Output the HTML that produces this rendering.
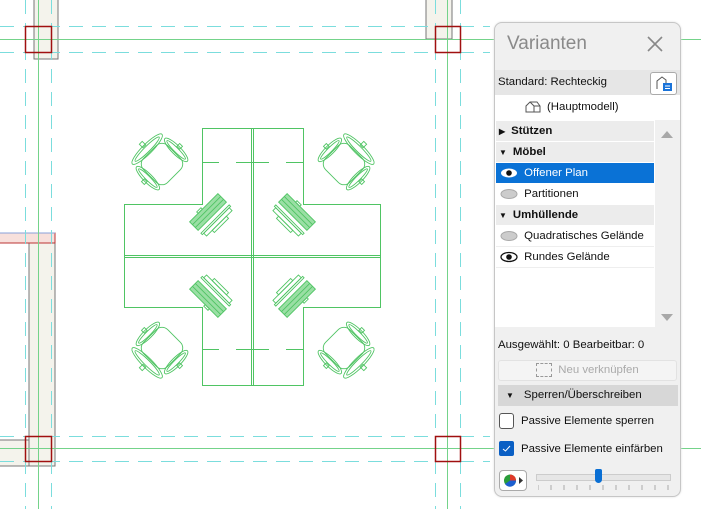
<!DOCTYPE html>
<html><head><meta charset="utf-8"><style>
body{margin:0;width:701px;height:509px;overflow:hidden;background:#fff;font-family:"Liberation Sans",sans-serif;position:relative}
svg.bg{position:absolute;left:0;top:0}
.p{position:absolute;left:494px;top:22px;width:185px;height:473px;background:#f0f0f0;border:1px solid #c6c6c6;border-radius:8px;box-shadow:0 0 2px #ddd;font-size:11.4px;color:#111}
.a{position:absolute}
.row{position:absolute;left:1px;width:158px;height:20px;line-height:20px}
.grp{background:#ececec;font-weight:bold}
.eye{display:inline-block;vertical-align:middle}
</style></head><body>
<svg class="bg" width="701" height="509" xmlns="http://www.w3.org/2000/svg">
<defs>
<g id="ch" fill="none" stroke="#4fc463" stroke-width="0.9">
<rect x="-17" y="-17" width="34" height="34" rx="8"/>
<ellipse cx="0" cy="-21" rx="21" ry="5"/><ellipse cx="0" cy="-21" rx="17" ry="2.8"/>
<ellipse cx="-20" cy="0" rx="4.5" ry="16"/><ellipse cx="20" cy="0" rx="4.5" ry="16"/>
<ellipse cx="-20" cy="0" rx="2.2" ry="13"/><ellipse cx="20" cy="0" rx="2.2" ry="13"/>
<rect x="-2" y="-30" width="4" height="5"/>
<rect x="-27" y="-2" width="4" height="4"/><rect x="23" y="-2" width="4" height="4"/>
</g>
<g id="kb" fill="none" stroke="#4fc463" stroke-width="0.9">
<rect x="-20" y="-6" width="40" height="12" fill="#9adfa4"/>
<line x1="-20" y1="-2" x2="20" y2="-2"/><line x1="-20" y1="2" x2="20" y2="2"/>
<rect x="-8" y="-8" width="6" height="2"/>
<rect x="-18" y="12" width="36" height="4"/><rect x="-10" y="16" width="20" height="3"/>
<rect x="-20" y="10" width="40" height="2"/>
</g>
</defs>
<g fill="#f4f3ec" stroke="#777" stroke-width="1">
<rect x="34" y="-2" width="24" height="61"/>
<rect x="426" y="-2" width="26" height="41"/>
<rect x="29" y="243" width="26" height="223"/>
<rect x="-2" y="440" width="31" height="26"/>
</g>
<rect x="-2" y="233" width="57" height="10" fill="#f7e0dc" stroke="#b33" stroke-width="1"/>
<line x1="0" y1="233" x2="55" y2="233" stroke="#8aa0d8"/>
<g stroke="#7bdddd" stroke-width="1" stroke-dasharray="14,9">
<line x1="0" y1="26.5" x2="490" y2="26.5"/><line x1="0" y1="52.5" x2="490" y2="52.5"/>
<line x1="0" y1="436.5" x2="490" y2="436.5"/><line x1="0" y1="461.5" x2="490" y2="461.5"/>
<line x1="25.5" y1="0" x2="25.5" y2="509"/><line x1="51.5" y1="0" x2="51.5" y2="509"/>
<line x1="435.5" y1="0" x2="435.5" y2="509"/><line x1="460.5" y1="0" x2="460.5" y2="509"/>
</g>
<g stroke="#74d38a" stroke-width="1">
<line x1="0" y1="39.5" x2="701" y2="39.5"/><line x1="0" y1="448.5" x2="701" y2="448.5"/>
<line x1="38.5" y1="0" x2="38.5" y2="509"/><line x1="447.5" y1="0" x2="447.5" y2="509"/>
</g>
<g fill="none" stroke="#a01010" stroke-width="1.5">
<rect x="25.5" y="26.5" width="26" height="26"/><rect x="435.5" y="26.5" width="25" height="26"/>
<rect x="25.5" y="436.5" width="26" height="25"/><rect x="435.5" y="436.5" width="25" height="25"/>
</g>
<g fill="none" stroke="#4fc463" stroke-width="1">
<path d="M202.5 128.5H303.5V204.5H380.5V307.5H303.5V385.5H202.5V307.5H124.5V204.5H202.5Z"/>
<line x1="124" y1="255.5" x2="380" y2="255.5"/><line x1="124" y1="257.5" x2="380" y2="257.5"/>
<line x1="251.5" y1="128" x2="251.5" y2="385"/><line x1="253.5" y1="128" x2="253.5" y2="385"/>
<path d="M202 162.5H219M236 162.5H269M286 162.5H303M202 349.5H219M236 349.5H269M286 349.5H303"/>
</g>
<use href="#ch" transform="translate(162,164) rotate(-45)"/>
<use href="#ch" transform="translate(344,164) rotate(45)"/>
<use href="#ch" transform="translate(162,348) rotate(-135)"/>
<use href="#ch" transform="translate(344,348) rotate(135)"/>
<use href="#kb" transform="translate(208,212) rotate(-45)"/>
<use href="#kb" transform="translate(297,212) rotate(45)"/>
<use href="#kb" transform="translate(208,299) rotate(-135)"/>
<use href="#kb" transform="translate(297,299) rotate(135)"/>
</svg>
<div class="p">
<div class="a" style="left:12px;top:10px;font-size:19px;color:#8a8a8a">Varianten</div>
<svg class="a" style="left:151px;top:12px" width="18" height="18"><path d="M2 2L16 16M16 2L2 16" stroke="#888" stroke-width="1.6"/></svg>
<div class="a" style="left:0;top:47px;width:185px;height:25px;background:#e6e6e6"></div>
<div class="a" style="left:3px;top:53px">Standard: Rechteckig</div>
<div class="a" style="left:155px;top:49px;width:25px;height:21px;background:#fff;border:1px solid #aaa;border-radius:3px"><svg width="25" height="21"><path d="M6 16V8L11 4L15 7V16" fill="none" stroke="#555"/><rect x="12" y="10" width="9" height="8" fill="#1a73d9"/><path d="M14 13H19M14 15.5H19" stroke="#fff"/></svg></div>
<div class="a" style="left:0;top:72px;width:185px;height:25px;background:#fff"></div>
<svg class="a" style="left:30px;top:78px" width="16" height="12"><path d="M1 11V5L5 1H12L15 5V11ZM5 1L9 5V11M9 5H15" fill="none" stroke="#555"/></svg>
<div class="a" style="left:52px;top:78px">(Hauptmodell)</div>
<div class="a" style="left:0;top:97px;width:160px;height:207px;background:#fff"></div>
<div class="a" style="left:160px;top:97px;width:24px;height:207px;background:#f0f0f0"></div>
<svg class="a" style="left:166px;top:107px" width="12" height="10"><path d="M0 8L6 1L12 8Z" fill="#a8a8a8"/></svg>
<svg class="a" style="left:166px;top:290px" width="12" height="10"><path d="M0 1L6 8L12 1Z" fill="#a8a8a8"/></svg>
<div class="row grp" style="top:98px"><span style="font-size:8px;margin:0 6px 0 3px">▶</span>Stützen</div>
<div class="row grp" style="top:119px"><span style="font-size:8px;margin:0 6px 0 3px">▼</span>Möbel</div>
<div class="row" style="top:140px;background:#0a72d6;color:#fff"><svg class="eye" width="22" height="12" style="margin-left:3px"><ellipse cx="10" cy="6" rx="8" ry="4.5" fill="#fff"/><circle cx="10" cy="6" r="2.8" fill="#111"/></svg> Offener Plan</div>
<div class="row" style="top:161px"><svg class="eye" width="22" height="12" style="margin-left:3px"><ellipse cx="10" cy="6" rx="8" ry="4.5" fill="#ccc" stroke="#aaa"/></svg> Partitionen</div>
<div class="row grp" style="top:182px"><span style="font-size:8px;margin:0 6px 0 3px">▼</span>Umhüllende</div>
<div class="row" style="top:203px;border-bottom:1px solid #eee"><svg class="eye" width="22" height="12" style="margin-left:3px"><ellipse cx="10" cy="6" rx="8" ry="4.5" fill="#ccc" stroke="#aaa"/></svg> Quadratisches Gelände</div>
<div class="row" style="top:224px;border-bottom:1px solid #eee"><svg class="eye" width="22" height="12" style="margin-left:3px"><ellipse cx="10" cy="6" rx="8" ry="4.5" fill="#fff" stroke="#111" stroke-width="1.3"/><circle cx="10" cy="6" r="2.8" fill="#111"/></svg> Rundes Gelände</div>
<div class="a" style="left:3px;top:316px">Ausgewählt: 0 Bearbeitbar: 0</div>
<div class="a" style="left:3px;top:337px;width:177px;height:19px;border:1px solid #e2e2e2;border-radius:3px;background:#f4f4f4;color:#aaa;text-align:center;line-height:19px"><span style="display:inline-block;width:14px;height:12px;border:1px dashed #999;vertical-align:middle;margin-right:6px"></span>Neu verknüpfen</div>
<div class="a" style="left:3px;top:362px;width:180px;height:21px;background:#d7d7d7;line-height:21px"><span style="font-size:8px;margin:0 10px 0 8px">▼</span>Sperren/Überschreiben</div>
<div class="a" style="left:4px;top:390px;width:13px;height:14px;border:1px solid #555;border-radius:3px;background:#fff"></div>
<div class="a" style="left:26px;top:392px">Passive Elemente sperren</div>
<div class="a" style="left:4px;top:418px;width:15px;height:15px;background:#0a5fc4;border-radius:2px"><svg width="15" height="15"><path d="M4 8L6.5 10L11 5" fill="none" stroke="#fff"/></svg></div>
<div class="a" style="left:26px;top:420px">Passive Elemente einfärben</div>
<div class="a" style="left:4px;top:447px;width:26px;height:19px;background:#fff;border:1px solid #aaa;border-radius:4px"><svg width="26" height="19"><circle cx="10" cy="9.5" r="6" fill="#2a9d3a"/><path d="M10 9.5V3.5A6 6 0 0 1 16 9.5Z" fill="#e03a2a"/><path d="M10 9.5H16A6 6 0 0 1 5 13Z" fill="#1d5fd0"/><path d="M19 6L23 9.5L19 13Z" fill="#333"/></svg></div>
<div class="a" style="left:41px;top:451px;width:133px;height:5px;background:#e6e6e6;border:1px solid #ccc"></div>
<div class="a" style="left:100px;top:446px;width:7px;height:14px;background:#0a6fd4;border-radius:2px 2px 4px 4px"></div>
<svg class="a" style="left:43px;top:462px" width="132" height="6"><path d="M0 0V5M13 0V5M26 0V5M39 0V5M52 0V5M65 0V5M78 0V5M91 0V5M104 0V5M117 0V5M130 0V5" stroke="#aaa"/></svg>
</div>
</body></html>
